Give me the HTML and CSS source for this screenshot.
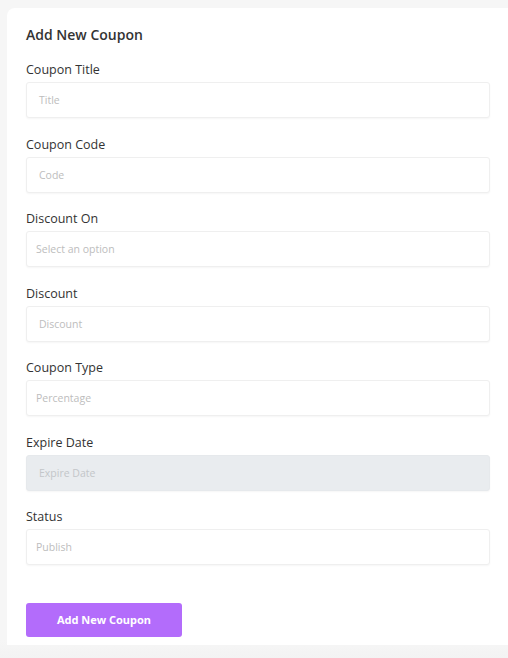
FILE: index.html
```html
<!DOCTYPE html>
<html lang="en">
<head>
<meta charset="utf-8">
<title>Add New Coupon</title>
<link rel="stylesheet" href="styles.css">
</head>
<body>
<div class="page">
  <form class="card">
    <h2 class="card-title">Add New Coupon</h2>
    <div class="field">
      <label class="label">Coupon Title</label>
      <div class="control">Title</div>
    </div>
    <div class="field">
      <label class="label">Coupon Code</label>
      <div class="control">Code</div>
    </div>
    <div class="field">
      <label class="label">Discount On</label>
      <div class="control select">Select an option</div>
    </div>
    <div class="field">
      <label class="label">Discount</label>
      <div class="control">Discount</div>
    </div>
    <div class="field">
      <label class="label">Coupon Type</label>
      <div class="control select">Percentage</div>
    </div>
    <div class="field">
      <label class="label">Expire Date</label>
      <div class="control disabled">Expire Date</div>
    </div>
    <div class="field">
      <label class="label">Status</label>
      <div class="control select">Publish</div>
    </div>
    <div class="actions">
      <button type="button" class="btn">Add New Coupon</button>
    </div>
  </form>
</div>
</body>
</html>
```

FILE: styles.css
```css
html, body {
  margin: 0;
  padding: 0;
}
body {
  background: #f6f6f6;
  font-family: "Open Sans", "Noto Sans", sans-serif;
  color: #333;
  overflow: hidden;
}
.page {
  padding: 8px 0 0 7px;
  height: 658px;
  box-sizing: border-box;
  background: linear-gradient(to bottom, #f6f6f6 0, #f6f6f6 640px, #f3f3f3 658px);
}
.card {
  background: #fff;
  width: 502px;
  box-sizing: border-box;
  padding: 17px 19px 8px 19px;
  border-radius: 8px 0 0 0;
  display: flex;
  flex-direction: column;
}
.card-title {
  margin: 0 0 16px 0;
  font-size: 14px;
  line-height: 20px;
  font-weight: 600;
  color: #333;
}
.field {
  display: flex;
  flex-direction: column;
  gap: 3px;
  margin-bottom: 17.5px;
}
.label {
  font-size: 12.5px;
  line-height: 18px;
  color: #333;
}
.control {
  height: 36px;
  box-sizing: border-box;
  border: 1px solid #efefef;
  border-radius: 3px;
  box-shadow: 0 1px 2px rgba(0, 0, 0, 0.04);
  padding: 0 12px;
  display: flex;
  align-items: center;
  font-size: 10.5px;
  color: #bdbdbd;
  background: #fff;
}
.control.select {
  padding-left: 9px;
}
.control.disabled {
  background: #e9ecef;
  border-color: #e6e9ec;
  color: #c3c6c9;
}
.actions {
  margin-top: 20px;
}
.btn {
  width: 156px;
  height: 34px;
  border: none;
  border-radius: 3px;
  background: #b36cfb;
  color: #fff;
  font-family: "Noto Sans", "Open Sans", sans-serif;
  font-weight: 700;
  font-size: 11px;
  cursor: pointer;
}
```
